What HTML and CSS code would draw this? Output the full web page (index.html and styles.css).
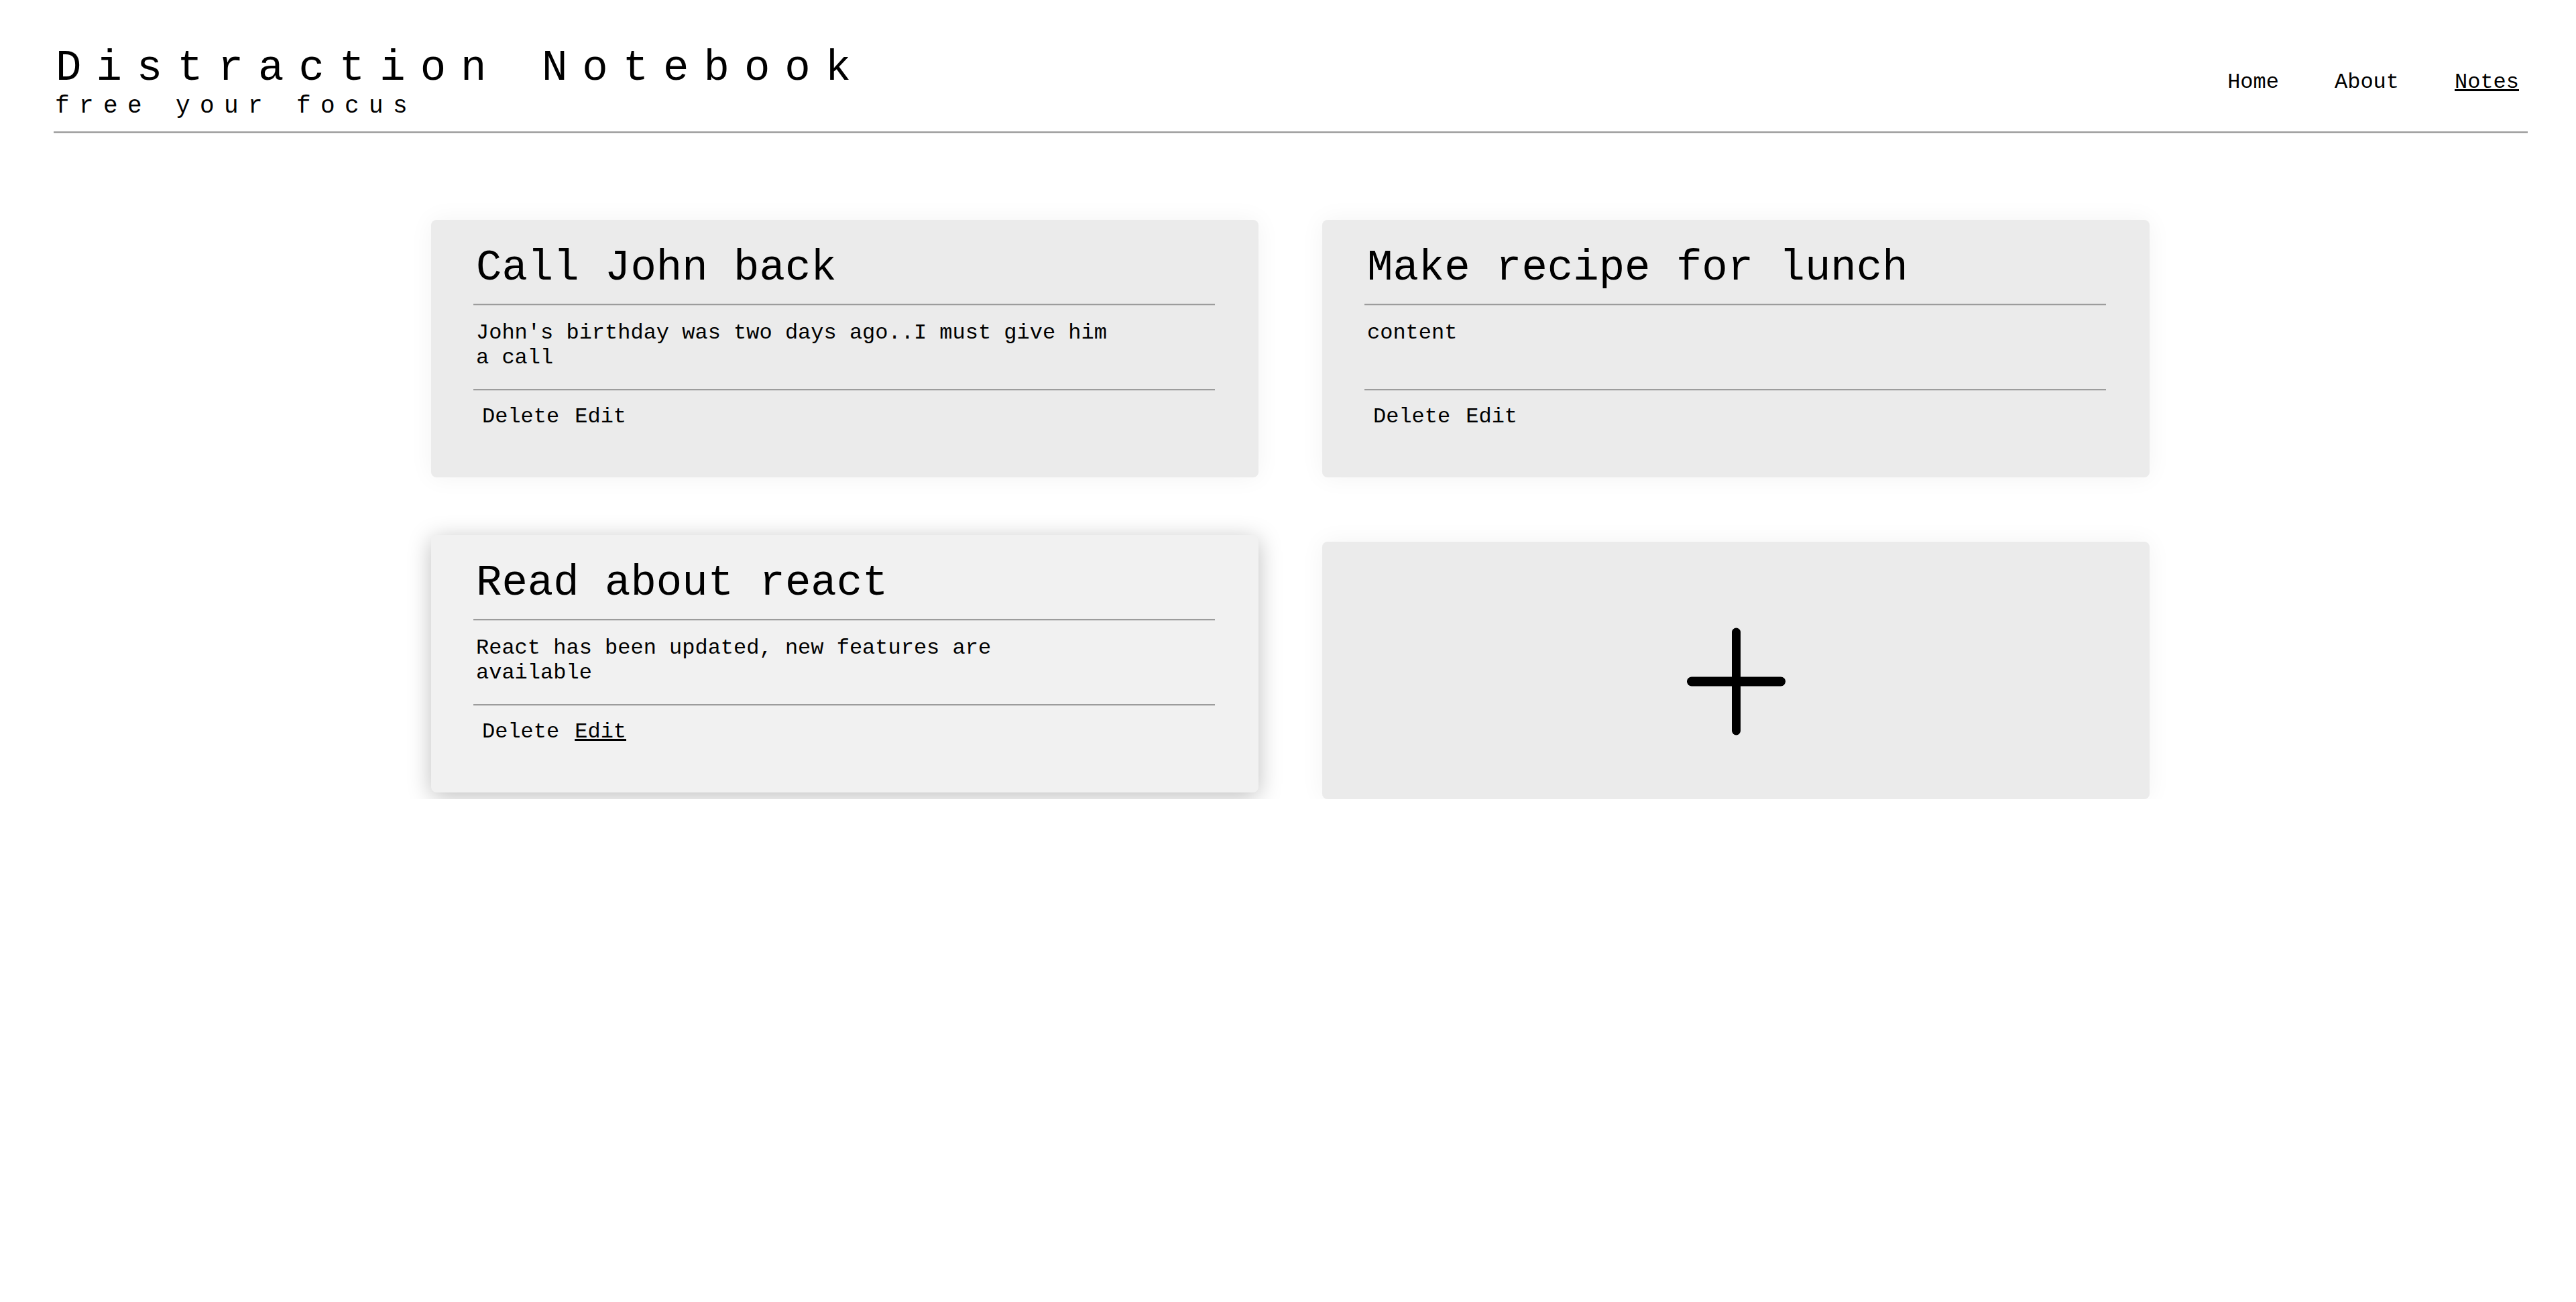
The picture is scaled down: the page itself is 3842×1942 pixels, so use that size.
FILE: index.html
```html
<!DOCTYPE html>
<html lang="en">
<head>
<meta charset="utf-8">
<title>Distraction Notebook</title>
<link rel="stylesheet" href="styles.css">
</head>
<body>
<header class="site-header">
  <div class="brand">
    <h1 class="brand-title">Distraction Notebook</h1>
    <p class="brand-sub">free your focus</p>
  </div>
  <nav class="nav">
    <a class="nav-link" href="#">Home</a>
    <a class="nav-link" href="#">About</a>
    <a class="nav-link nav-link-active" href="#">Notes</a>
  </nav>
</header>
<hr class="header-rule">
<main class="notes">
  <article class="note">
    <h2 class="note-title">Call John back</h2>
    <hr class="note-rule">
    <div class="note-body"><p class="note-text">John's birthday was two days ago..I must give him a call</p></div>
    <hr class="note-rule">
    <div class="note-actions"><span class="note-btn">Delete</span><span class="note-btn">Edit</span></div>
  </article>
  <article class="note">
    <h2 class="note-title">Make recipe for lunch</h2>
    <hr class="note-rule">
    <div class="note-body"><p class="note-text">content</p></div>
    <hr class="note-rule">
    <div class="note-actions"><span class="note-btn">Delete</span><span class="note-btn">Edit</span></div>
  </article>
  <article class="note note-hover">
    <h2 class="note-title">Read about react</h2>
    <hr class="note-rule">
    <div class="note-body"><p class="note-text">React has been updated, new features are available</p></div>
    <hr class="note-rule">
    <div class="note-actions"><span class="note-btn">Delete</span><span class="note-btn note-btn-hover">Edit</span></div>
  </article>
  <article class="note note-add">
    <svg class="add-icon" width="147" height="161" viewBox="0 0 147 161" aria-hidden="true">
      <line x1="7" y1="80.5" x2="140" y2="80.5" stroke="#000" stroke-width="14" stroke-linecap="round"/>
      <line x1="73.5" y1="7" x2="73.5" y2="154" stroke="#000" stroke-width="13" stroke-linecap="round"/>
    </svg>
  </article>
</main>
</body>
</html>
```
FILE: styles.css
```css
html, body {
  margin: 0;
  padding: 0;
  background: #ffffff;
}
body {
  font-family: "Courier New", Courier, "Nimbus Mono PS", "Nimbus Mono L", FreeMono, "Liberation Mono", monospace;
  color: #000;
  font-size: 32px;
}
.site-header {
  display: flex;
  justify-content: space-between;
  align-items: center;
  margin: 0 72px 0 80px;
  padding-top: 66px;
}
.brand-title {
  margin: 0 0 0 3px;
  font-size: 64px;
  font-weight: normal;
  letter-spacing: 22px;
  line-height: normal;
}
.brand-sub {
  margin: 0 0 0 2px;
  font-size: 36px;
  letter-spacing: 14.4px;
  line-height: normal;
}
.nav {
  display: flex;
  gap: 83px;
  margin-right: 13px;
}
.nav-link {
  color: #000;
  text-decoration: none;
  font-size: 32px;
  line-height: normal;
}
.nav-link-active {
  text-decoration: underline;
  text-decoration-thickness: 3px;
}
.header-rule {
  margin: 17px 72px 0 80px;
  border: 0;
  border-top: 2px solid #9a9a9a;
  border-bottom: 1px solid #e2e2e2;
  height: 0;
}
.notes {
  display: grid;
  grid-template-columns: 1234px 1234px;
  column-gap: 95px;
  row-gap: 96px;
  margin: 129px 0 0 643px;
}
.note {
  box-sizing: border-box;
  height: 384px;
  background: #ebebeb;
  border-radius: 8px;
  padding: 36px 65px 0 67px;
  box-shadow: 0 0 36px rgba(0, 0, 0, 0.05);
}
.note-hover {
  background: #f1f1f1;
  transform: translateY(-10px);
  box-shadow: 0 6px 34px rgba(0, 0, 0, 0.26);
}
.note-title {
  margin: 0;
  font-size: 64px;
  font-weight: normal;
  line-height: normal;
}
.note-rule {
  margin: 17px 0 0 -4px;
  border: 0;
  border-top: 2px solid #9c9c9c;
  border-bottom: 1px solid #d6d6d6;
  height: 0;
}
.note-body {
  box-sizing: border-box;
  height: 124px;
  padding-top: 22px;
}
.note-body + .note-rule {
  margin-top: 0;
}
.note-text {
  margin: 0;
  max-width: 950px;
  font-size: 32px;
  line-height: 37px;
}
.note-actions {
  display: flex;
  gap: 23px;
  padding: 20px 0 0 9px;
  font-size: 32px;
  line-height: normal;
}
.note-btn-hover {
  text-decoration: underline;
  text-decoration-thickness: 3px;
}
.note-add {
  display: flex;
  align-items: center;
  justify-content: center;
  padding: 32px 0 0 0;
}
```
